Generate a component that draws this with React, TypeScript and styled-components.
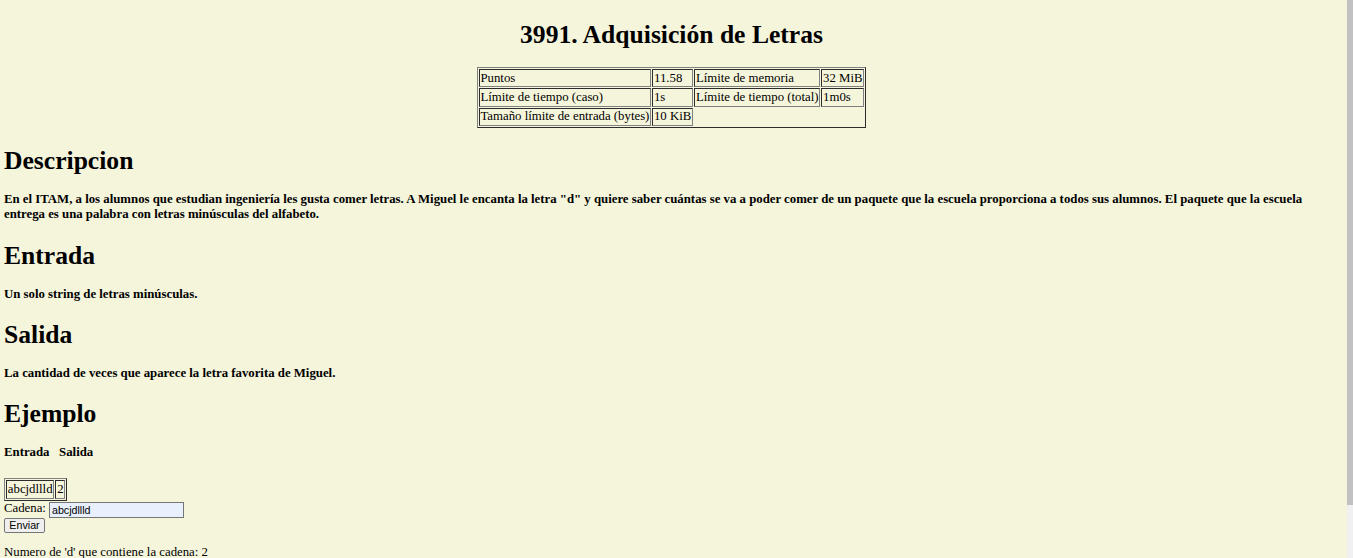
import React from "react";
import styled, { createGlobalStyle } from "styled-components";

const GlobalStyle = createGlobalStyle`
  html, body {
    margin: 0;
    padding: 0;
    background: #f5f5dc;
  }
  body {
    font-family: "Liberation Serif", "Times New Roman", serif;
    font-size: 12.8px;
    color: #000;
  }
`;

const Page = styled.div`
  padding: 20px 14px 0 4px;
  display: flow-root;
`;

const Title = styled.h1`
  margin: 0 0 18px;
  font-size: 25.6px;
  line-height: 29px;
  font-weight: bold;
  text-align: center;
`;

const Centered = styled.div`
  display: flex;
  justify-content: center;
`;

const InfoTable = styled.table`
  border-collapse: separate;
  border-spacing: 1.6px;
  border: 1px outset #808080;
  font-size: 12.8px;
`;

const Cell = styled.td`
  border: 1px inset #808080;
  padding: 0.8px;
  line-height: 14.7px;
  white-space: nowrap;
`;

const SectionTitle = styled.h2`
  margin: 18.4px 0 17px;
  font-size: 25.6px;
  line-height: 29px;
  font-weight: bold;
`;

const Statement = styled.h4<{ $after?: number }>`
  margin: 17px 0 ${(p) => p.$after ?? 17}px;
  font-size: 12.8px;
  line-height: 15px;
  font-weight: bold;
  white-space: ${(p) => (p.$after ? "pre" : "normal")};
`;

const SampleTable = styled(InfoTable)`
  margin-top: 0;
`;

const Form = styled.form`
  margin: 0;
  line-height: 14px;
`;

const Label = styled.label`
  font-size: 12.8px;
`;

const TextInput = styled.input`
  box-sizing: border-box;
  width: 135px;
  height: 16px;
  margin: 0 0 0 3px;
  padding: 0 2px;
  border: 1px solid #767676;
  background: #e8f0fe;
  font-family: "Liberation Sans", Arial, sans-serif;
  font-size: 10.7px;
  color: #000;
  vertical-align: -2px;
  outline: none;
`;

const SubmitButton = styled.button`
  display: block;
  box-sizing: border-box;
  width: 41px;
  height: 15px;
  margin: 0;
  padding: 0;
  border: 1px solid #767676;
  border-radius: 2px;
  background: #efefef;
  font-family: "Liberation Sans", Arial, sans-serif;
  font-size: 10.7px;
  line-height: 12px;
  color: #000;
`;

const Result = styled.p`
  margin: 12px 0 0;
  font-size: 12.8px;
  line-height: 15px;
`;

const ScrollTrack = styled.div`
  position: fixed;
  top: 0;
  right: 0;
  width: 6px;
  height: 100%;
  background: #f0f0f0;
`;

const ScrollThumb = styled.div`
  height: 505px;
  background: #c1c1c1;
`;

const info = [
  [["Puntos", "11.58"], ["Límite de memoria", "32 MiB"]],
  [["Límite de tiempo (caso)", "1s"], ["Límite de tiempo (total)", "1m0s"]],
  [["Tamaño límite de entrada (bytes)", "10 KiB"]],
];

export default function App() {
  const [cadena, setCadena] = React.useState("abcjdllld");
  const count = cadena.split("").filter((c) => c === "d").length;

  return (
    <>
      <GlobalStyle />
      <Page>
        <Title>3991. Adquisición de Letras</Title>
        <Centered>
          <InfoTable>
            <tbody>
              {info.map((row, i) => (
                <tr key={i}>
                  {row.flat().map((v, j) => (
                    <Cell key={j}>{v}</Cell>
                  ))}
                </tr>
              ))}
            </tbody>
          </InfoTable>
        </Centered>

        <SectionTitle>Descripcion</SectionTitle>
        <Statement>
          En el ITAM, a los alumnos que estudian ingeniería les gusta comer letras. A Miguel le
          encanta la letra "d" y quiere saber cuántas se va a poder comer de un paquete que la
          escuela proporciona a todos sus alumnos. El paquete que la escuela entrega es una palabra
          con letras minúsculas del alfabeto.
        </Statement>

        <SectionTitle>Entrada</SectionTitle>
        <Statement>Un solo string de letras minúsculas.</Statement>

        <SectionTitle>Salida</SectionTitle>
        <Statement>La cantidad de veces que aparece la letra favorita de Miguel.</Statement>

        <SectionTitle>Ejemplo</SectionTitle>
        <Statement $after={18}>{"Entrada   Salida"}</Statement>

        <SampleTable>
          <tbody>
            <tr>
              <Cell>abcjdllld</Cell>
              <Cell>2</Cell>
            </tr>
          </tbody>
        </SampleTable>

        <Form onSubmit={(e) => e.preventDefault()}>
          <Label>
            Cadena:
            <TextInput value={cadena} onChange={(e) => setCadena(e.target.value)} />
          </Label>
          <SubmitButton type="submit">Enviar</SubmitButton>
        </Form>
        <Result>Numero de 'd' que contiene la cadena: {count}</Result>
      </Page>
      <ScrollTrack>
        <ScrollThumb />
      </ScrollTrack>
    </>
  );
}
